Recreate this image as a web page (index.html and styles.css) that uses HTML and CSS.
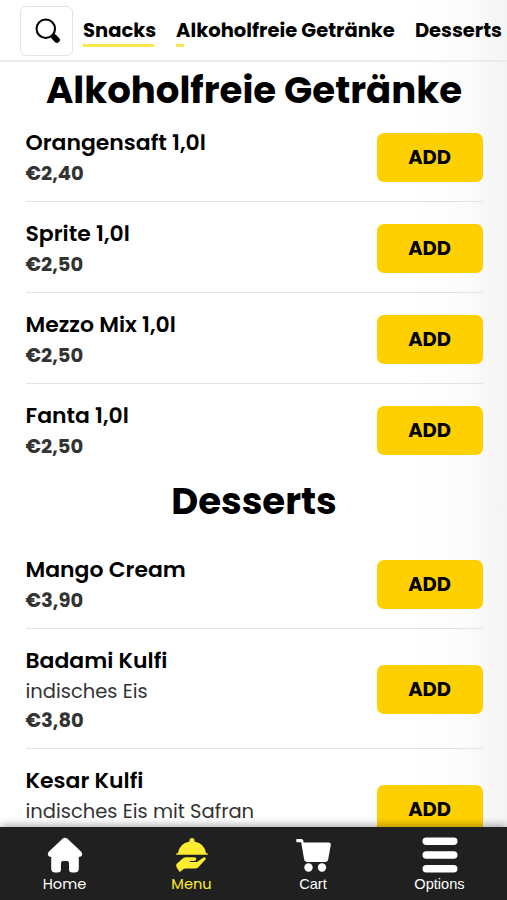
FILE: index.html
```
<!DOCTYPE html>
<html lang="de">
<head>
<meta charset="utf-8">
<meta name="viewport" content="width=device-width">
<title>Menu</title>
<link rel="stylesheet" href="styles.css">
</head>
<body>
<div class="app">
  <header class="topbar">
    <button class="search" aria-label="Search">
      <svg width="26" height="26" viewBox="0 0 27 27" fill="none" stroke="#000">
        <circle cx="11.2" cy="11.2" r="9.6" stroke-width="2.2"/>
        <path d="M17.8 17.8l2 2" stroke-width="2.6"/>
        <path d="M19.8 19.8l3 3" stroke-width="6" stroke-linecap="round"/>
      </svg>
    </button>
    <nav class="categories">
      <a class="category category-done">Snacks</a>
      <a class="category category-current">Alkoholfreie Getränke</a>
      <a class="category">Desserts</a>
    </nav>
  </header>

  <main class="content">
    <h1 class="section-title">Alkoholfreie Getränke</h1>
    <ul class="items">
      <li class="item"><div><h2 class="name">Orangensaft 1,0l</h2><p class="price">€2,40</p></div><button class="add">ADD</button></li>
      <li class="item"><div><h2 class="name">Sprite 1,0l</h2><p class="price">€2,50</p></div><button class="add">ADD</button></li>
      <li class="item"><div><h2 class="name">Mezzo Mix 1,0l</h2><p class="price">€2,50</p></div><button class="add">ADD</button></li>
      <li class="item"><div><h2 class="name">Fanta 1,0l</h2><p class="price">€2,50</p></div><button class="add">ADD</button></li>
    </ul>
    <h1 class="section-title section-title-next">Desserts</h1>
    <ul class="items">
      <li class="item"><div><h2 class="name">Mango Cream</h2><p class="price">€3,90</p></div><button class="add">ADD</button></li>
      <li class="item"><div><h2 class="name">Badami Kulfi</h2><p class="desc">indisches Eis</p><p class="price">€3,80</p></div><button class="add">ADD</button></li>
      <li class="item"><div><h2 class="name">Kesar Kulfi</h2><p class="desc">indisches Eis mit Safran</p><p class="price">€3,80</p></div><button class="add">ADD</button></li>
    </ul>
  </main>

  <nav class="tabbar">
    <a class="tab tab-home">
      <svg width="36" height="36" viewBox="0 0 36 36" fill="currentColor"><path d="M15.8 1.600q2.200-1.800 4.400 0L34 14.400q1.600 1.700 1 3.800-.7 1.800-3.200 1.800v11.500q0 4-4 4h-2.600q-3.200 0-3.200-3.200v-6q0-2.200-2-2.200h-4q-2 0-2 2.200v6q0 3.200-3.200 3.200H8.200q-4 0-4-4V20q-2.500 0-3.200-1.800-.6-2.100 1-3.800z"/></svg>
      <span>Home</span>
    </a>
    <a class="tab tab-menu">
      <svg width="32" height="36" viewBox="0 0 32 36" fill="currentColor"><path d="M2 16.200Q3.400 6.200 13.500 4.400V3.600Q13.500 1 16 1t2.500 2.600v.8Q28.600 6.200 30 16.200h1q1 0 1 .8t-1 .8H1q-1 0-1-.8t1-.8z"/><path d="M.3 29.700V27.300L5.800 22.200Q7.500 20.300 10 20.300h8.300q2.100 0 2.100 1.700 0 1.900-2.300 1.900h-4.300v1.200h6q1.400 0 2.200-.9l5.500-3.600q1.600-.8 2.200.3.300.9-.7 2l-6.500 7.100q-1.600 1.600-3.900 1.600H9.800q-2 0-3.300 1.300l-2.900 2.200z"/></svg>
      <span>Menu</span>
    </a>
    <a class="tab tab-cart">
      <svg width="36" height="36" viewBox="0 0 36 36" fill="currentColor"><path d="M2 2.600h4q1.400 0 1.700 1.400L8 6.300h25.700q1.700 0 1.400 1.700l-2.700 14.500q-.3 1.800-2.200 1.800H12.500q-2.300 0-2.700-2.200L6.900 5.300Q6.700 4.600 6 4.600H2z" stroke="currentColor" stroke-width="1.400" stroke-linejoin="round"/><circle cx="13.500" cy="30.500" r="4.200"/><circle cx="27" cy="30.500" r="4.200"/></svg>
      <span>Cart</span>
    </a>
    <a class="tab tab-options">
      <svg width="36" height="36" viewBox="0 0 36 36" fill="currentColor"><rect x=".5" y=".5" width="35" height="7.500" rx="3.700"/><rect x=".5" y="14.200" width="35" height="7.500" rx="3.700"/><rect x=".5" y="28" width="35" height="7.500" rx="3.700"/></svg>
      <span>Options</span>
    </a>
  </nav>
</div>
</body>
</html>
```
FILE: styles.css
```
* { box-sizing: border-box; }

body, h1, h2, p, ul { margin: 0; padding: 0; }

body {
  font-family: Poppins, Inter, sans-serif;
  color: #000;
  overflow: hidden;
}

button { font: inherit; color: inherit; padding: 0; }
ul { list-style: none; }

.app {
  display: flex;
  flex-direction: column;
  height: 900px;
  overflow: hidden;
  background: linear-gradient(to right, #fff 80%, #fcfcfc 91%, #f4f4f4);
}

.topbar {
  display: flex;
  flex: none;
  align-items: flex-start;
  height: 62px;
  padding: 6px 0 0 20px;
  border-bottom: 2px solid #ececec;
  white-space: nowrap;
}

.search {
  display: flex;
  flex: none;
  align-items: center;
  justify-content: center;
  width: 53px;
  height: 50px;
  padding-left: 2px;
  border: 1px solid #e4e4e4;
  border-radius: 6px;
  background: #fff;
}

.categories {
  display: flex;
  gap: 20px;
  margin-left: 10px;
}

.category {
  height: 41px;
  padding-top: 10px;
  font-size: 19.5px;
  font-weight: 700;
  line-height: 30px;
  background: linear-gradient(#fbe84f, #fbe84f) left bottom / 0 3px no-repeat;
}

.category-done { background-size: 71px 3px; }
.category-current { background-size: 8px 3px; }

.content {
  flex: 1;
  min-height: 0;
  overflow: hidden;
  padding: 0 24.5px 0 25.5px;
}

.section-title {
  height: 49px;
  font-size: 37.1px;
  font-weight: 700;
  line-height: 56px;
  text-align: center;
  white-space: nowrap;
}

.section-title-next {
  height: 63px;
  line-height: 52px;
}

.item {
  display: flex;
  align-items: center;
  justify-content: space-between;
  padding: 15.5px 0 13px;
  border-bottom: 1px solid #e3e3e3;
}

.item:last-child { border-bottom-color: transparent; }

.name {
  margin-bottom: 1px;
  font-size: 21.95px;
  font-weight: 600;
  line-height: 31.5px;
}

.desc, .price {
  font-size: 19.5px;
  line-height: 29px;
  color: #333;
}

.price { font-weight: 700; }

.add {
  width: 106px;
  height: 49px;
  border: 0;
  border-radius: 7px;
  background: #ffd000;
  font-size: 19.5px;
  font-weight: 700;
}

.tabbar {
  display: grid;
  grid-template-columns: 129px 125px 118px 1fr;
  flex: none;
  position: relative;
  height: 73px;
  background: #202020;
  box-shadow: 0 -2px 8px rgba(0, 0, 0, .32);
  color: #fff;
}

.tab {
  display: flex;
  flex-direction: column;
  align-items: center;
  padding-top: 10px;
  font-size: 14.6px;
  line-height: 22px;
}

.tab-menu { color: #ffeb2f; }

.tab-cart, .tab-options {
  font-family: "Liberation Sans", sans-serif;
}
```
